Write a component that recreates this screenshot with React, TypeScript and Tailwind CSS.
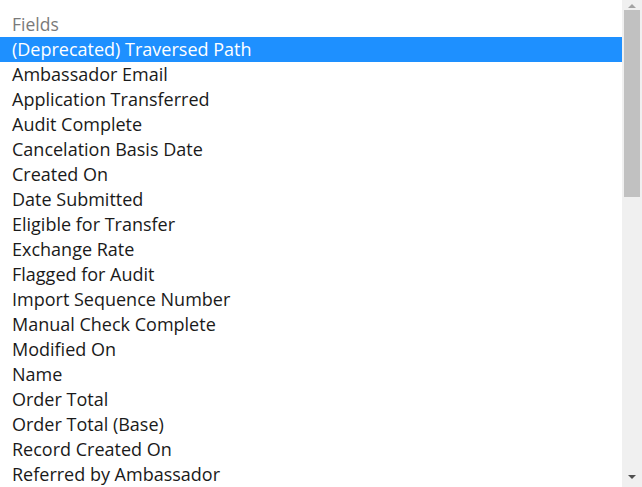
const fields = [
  'Ambassador Email',
  'Application Transferred',
  'Audit Complete',
  'Cancelation Basis Date',
  'Created On',
  'Date Submitted',
  'Eligible for Transfer',
  'Exchange Rate',
  'Flagged for Audit',
  'Import Sequence Number',
  'Manual Check Complete',
  'Modified On',
  'Name',
  'Order Total',
  'Order Total (Base)',
  'Record Created On',
  'Referred by Ambassador',
];

export default function App() {
  return (
    <div className="flex h-[487px] w-[642px] overflow-hidden bg-white font-['Open_Sans',sans-serif] text-[18px] leading-[25px] text-[#1a1a1a]">
      <div className="flex flex-1 flex-col pt-3">
        <div className="h-[25px] px-3 text-[17.5px] text-[#7a7a7a]">Fields</div>
        <div className="h-[25px] bg-[#1e90ff] px-3 text-white">(Deprecated) Traversed Path</div>
        {fields.map(f => (
          <div key={f} className="h-[25px] shrink-0 px-3">
            {f}
          </div>
        ))}
      </div>

      {/* scrollbar */}
      <div className="flex w-[20px] flex-col bg-[#f0f0f0]">
        <div className="flex h-[10px] items-center justify-center">
          <svg width="8" height="5" viewBox="0 0 8 5">
            <path d="M0 5 L4 1 L8 5 Z" fill="#a3a3a3" />
          </svg>
        </div>
        <div className="mx-[2px] h-[187px] bg-[#c1c1c1]" />
        <div className="flex-1" />
        <div className="flex h-[20px] items-center justify-center">
          <svg width="8" height="5" viewBox="0 0 8 5">
            <path d="M0 0 L8 0 L4 4 Z" fill="#505050" />
          </svg>
        </div>
      </div>
    </div>
  );
}
